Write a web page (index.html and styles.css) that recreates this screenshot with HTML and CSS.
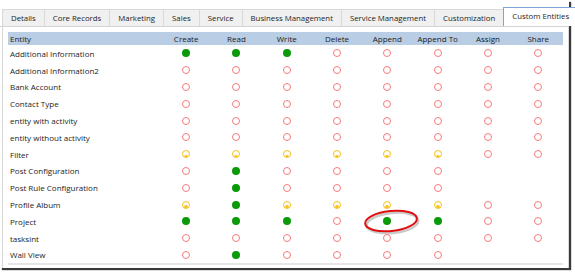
FILE: index.html
```html
<!DOCTYPE html>
<html>
<head>
<meta charset="utf-8">
<link rel="stylesheet" href="styles.css">
</head>
<body>
<div class="frame">
  <div class="tabs">
    <div class="tab">Details</div>
    <div class="tab">Core Records</div>
    <div class="tab">Marketing</div>
    <div class="tab">Sales</div>
    <div class="tab">Service</div>
    <div class="tab">Business Management</div>
    <div class="tab">Service Management</div>
    <div class="tab">Customization</div>
    <div class="tab active">Custom Entities</div>
  </div>
  <div class="panel">
    <div class="grid">
      <div class="hd ent">Entity</div><div class="hd">Create</div><div class="hd">Read</div><div class="hd">Write</div><div class="hd">Delete</div><div class="hd">Append</div><div class="hd">Append To</div><div class="hd">Assign</div><div class="hd">Share</div>

      <div class="ent">Additional Information</div><div><i class="d g"></i></div><div><i class="d g"></i></div><div><i class="d g"></i></div><div><i class="d r"></i></div><div><i class="d r"></i></div><div><i class="d r"></i></div><div><i class="d r"></i></div><div><i class="d r"></i></div>
      <div class="ent">Additional Information2</div><div><i class="d r"></i></div><div><i class="d r"></i></div><div><i class="d r"></i></div><div><i class="d r"></i></div><div><i class="d r"></i></div><div><i class="d r"></i></div><div><i class="d r"></i></div><div><i class="d r"></i></div>
      <div class="ent">Bank Account</div><div><i class="d r"></i></div><div><i class="d r"></i></div><div><i class="d r"></i></div><div><i class="d r"></i></div><div><i class="d r"></i></div><div><i class="d r"></i></div><div><i class="d r"></i></div><div><i class="d r"></i></div>
      <div class="ent">Contact Type</div><div><i class="d r"></i></div><div><i class="d r"></i></div><div><i class="d r"></i></div><div><i class="d r"></i></div><div><i class="d r"></i></div><div><i class="d r"></i></div><div><i class="d r"></i></div><div><i class="d r"></i></div>
      <div class="ent">entity with activity</div><div><i class="d r"></i></div><div><i class="d r"></i></div><div><i class="d r"></i></div><div><i class="d r"></i></div><div><i class="d r"></i></div><div><i class="d r"></i></div><div><i class="d r"></i></div><div><i class="d r"></i></div>
      <div class="ent">entity without activity</div><div><i class="d r"></i></div><div><i class="d r"></i></div><div><i class="d r"></i></div><div><i class="d r"></i></div><div><i class="d r"></i></div><div><i class="d r"></i></div><div><i class="d r"></i></div><div><i class="d r"></i></div>
      <div class="ent">Filter</div><div><i class="d y"></i></div><div><i class="d y"></i></div><div><i class="d y"></i></div><div><i class="d y"></i></div><div><i class="d y"></i></div><div><i class="d y"></i></div><div><i class="d r"></i></div><div><i class="d r"></i></div>
      <div class="ent">Post Configuration</div><div><i class="d r"></i></div><div><i class="d g"></i></div><div><i class="d r"></i></div><div><i class="d r"></i></div><div><i class="d r"></i></div><div><i class="d r"></i></div><div></div><div></div>
      <div class="ent">Post Rule Configuration</div><div><i class="d r"></i></div><div><i class="d g"></i></div><div><i class="d r"></i></div><div><i class="d r"></i></div><div><i class="d r"></i></div><div><i class="d r"></i></div><div></div><div></div>
      <div class="ent">Profile Album</div><div><i class="d y"></i></div><div><i class="d g"></i></div><div><i class="d y"></i></div><div><i class="d y"></i></div><div><i class="d y"></i></div><div><i class="d y"></i></div><div><i class="d r"></i></div><div><i class="d r"></i></div>
      <div class="ent">Project</div><div><i class="d g"></i></div><div><i class="d g"></i></div><div><i class="d g"></i></div><div><i class="d r"></i></div><div class="marked"><i class="d g"></i><svg class="ring" width="64" height="32" viewBox="0 0 64 32"><g transform="translate(1.5 2)"><ellipse cx="32" cy="16" rx="26" ry="10" transform="rotate(-6 32 16)" fill="none" stroke="#8a8a8a" stroke-width="2.4" opacity="0.45"/></g><ellipse cx="32" cy="16" rx="26" ry="10" transform="rotate(-6 32 16)" fill="none" stroke="#e01010" stroke-width="2"/></svg></div><div><i class="d g"></i></div><div><i class="d r"></i></div><div><i class="d r"></i></div>
      <div class="ent">tasksint</div><div><i class="d r"></i></div><div><i class="d r"></i></div><div><i class="d r"></i></div><div><i class="d r"></i></div><div><i class="d r"></i></div><div><i class="d r"></i></div><div><i class="d r"></i></div><div><i class="d r"></i></div>
      <div class="ent">Wall View</div><div><i class="d r"></i></div><div><i class="d g"></i></div><div><i class="d r"></i></div><div><i class="d r"></i></div><div><i class="d r"></i></div><div><i class="d r"></i></div><div></div><div></div>
    </div>
    <div class="scroll"></div>
  </div>
</div>
</body>
</html>
```
FILE: styles.css
```css
html, body {
  margin: 0;
  padding: 0;
  background: #ffffff;
}
body {
  font-family: "Open Sans", "Noto Sans", sans-serif;
  font-size: 8px;
  color: #1c1c1c;
  width: 575px;
  height: 273px;
  overflow: hidden;
}
.frame {
  width: 569px;
  height: 268px;
  background: #ffffff;
  box-shadow: 2px 2px 1px #3a3a3a;
  display: flex;
  flex-direction: column;
}
.tabs {
  display: flex;
  padding: 9px 0 0 2px;
  height: 17px;
  border-bottom: 1px solid #d4d4d4;
}
.tab {
  height: 16px;
  line-height: 16px;
  padding: 0 8px;
  font-size: 7.8px;
  background: #f0f0f0;
  border: 1px solid #d9d9d9;
  border-bottom: none;
  margin-right: -1px;
  white-space: nowrap;
}
.tab.active {
  background: #ffffff;
  border-color: #7ea7d8;
  height: 18px;
  line-height: 17px;
  margin-top: -2px;
  margin-bottom: -1px;
  position: relative;
  z-index: 1;
}
.panel {
  flex: 1;
  border-left: 1px solid #d9d9d9;
  border-right: 1px solid #d9d9d9;
  margin-left: 2px;
  padding: 5px 5px 0 5px;
}
.grid {
  display: grid;
  grid-template-columns: 153px repeat(8, 50.3px);
  grid-template-rows: 13px repeat(13, 16.8px);
  width: 555px;
}
.grid > div {
  display: flex;
  align-items: center;
  justify-content: center;
}
.grid > .ent {
  justify-content: flex-start;
  padding-left: 2px;
}
.hd {
  background: #b9cde4;
}
.d {
  display: block;
  width: 8px;
  height: 8px;
  border-radius: 50%;
  box-sizing: border-box;
  position: relative;
}
.d.r {
  border: 1.4px solid #f77b7b;
}
.d.g {
  background: #0a9a0a;
}
.d.y {
  border: 1.2px solid #f7c21a;
  overflow: hidden;
}
.d.y::after {
  content: "";
  position: absolute;
  left: 1px;
  bottom: -1.5px;
  width: 4px;
  height: 4px;
  border-radius: 50%;
  background: #f7c21a;
}
.marked {
  position: relative;
}
.ring {
  position: absolute;
  left: -3px;
  top: -8px;
}
.scroll {
  height: 2px;
  background: #e6e6e6;
  width: 555px;
}
```
